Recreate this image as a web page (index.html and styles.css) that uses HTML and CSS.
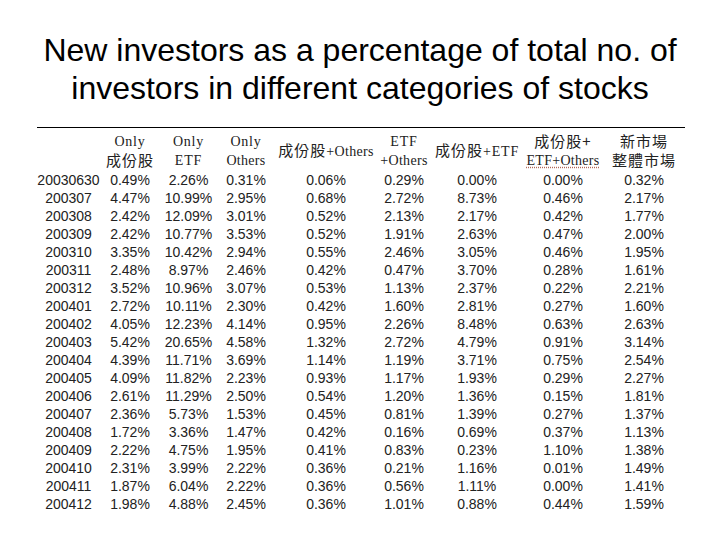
FILE: index.html
```html
<!DOCTYPE html>
<html lang="en">
<head>
<meta charset="utf-8">
<title>New investors</title>
<link rel="stylesheet" href="styles.css">
</head>
<body>
<div class="slide">
  <h1 class="title">New investors as a percentage of total no. of<br>investors in different categories of stocks</h1>
  <table class="data">
    <colgroup>
      <col class="c0"><col class="c1"><col class="c2"><col class="c3"><col class="c4"><col class="c5"><col class="c6"><col class="c7"><col class="c8">
    </colgroup>
    <thead>
      <tr>
        <th></th>
        <th><span class="lat">Only</span><br><span class="cjk">成份股</span></th>
        <th><span class="lat">Only</span><br><span class="lat">ETF</span></th>
        <th><span class="lat">Only</span><br><span class="lat sm">Others</span></th>
        <th><span class="cjk">成份股</span><span class="lat sm">+Others</span></th>
        <th><span class="lat">ETF</span><br><span class="lat sm">+Others</span></th>
        <th><span class="cjk">成份股</span><span class="lat">+ETF</span></th>
        <th><span class="cjk">成份股+</span><br><span class="lat sm spell">ETF+Others</span></th>
        <th><span class="cjk">新市場</span><br><span class="cjk">整體市場</span></th>
      </tr>
    </thead>
    <tbody>
      <tr><td>20030630</td><td>0.49%</td><td>2.26%</td><td>0.31%</td><td>0.06%</td><td>0.29%</td><td>0.00%</td><td>0.00%</td><td>0.32%</td></tr>
      <tr><td>200307</td><td>4.47%</td><td>10.99%</td><td>2.95%</td><td>0.68%</td><td>2.72%</td><td>8.73%</td><td>0.46%</td><td>2.17%</td></tr>
      <tr><td>200308</td><td>2.42%</td><td>12.09%</td><td>3.01%</td><td>0.52%</td><td>2.13%</td><td>2.17%</td><td>0.42%</td><td>1.77%</td></tr>
      <tr><td>200309</td><td>2.42%</td><td>10.77%</td><td>3.53%</td><td>0.52%</td><td>1.91%</td><td>2.63%</td><td>0.47%</td><td>2.00%</td></tr>
      <tr><td>200310</td><td>3.35%</td><td>10.42%</td><td>2.94%</td><td>0.55%</td><td>2.46%</td><td>3.05%</td><td>0.46%</td><td>1.95%</td></tr>
      <tr><td>200311</td><td>2.48%</td><td>8.97%</td><td>2.46%</td><td>0.42%</td><td>0.47%</td><td>3.70%</td><td>0.28%</td><td>1.61%</td></tr>
      <tr><td>200312</td><td>3.52%</td><td>10.96%</td><td>3.07%</td><td>0.53%</td><td>1.13%</td><td>2.37%</td><td>0.22%</td><td>2.21%</td></tr>
      <tr><td>200401</td><td>2.72%</td><td>10.11%</td><td>2.30%</td><td>0.42%</td><td>1.60%</td><td>2.81%</td><td>0.27%</td><td>1.60%</td></tr>
      <tr><td>200402</td><td>4.05%</td><td>12.23%</td><td>4.14%</td><td>0.95%</td><td>2.26%</td><td>8.48%</td><td>0.63%</td><td>2.63%</td></tr>
      <tr><td>200403</td><td>5.42%</td><td>20.65%</td><td>4.58%</td><td>1.32%</td><td>2.72%</td><td>4.79%</td><td>0.91%</td><td>3.14%</td></tr>
      <tr><td>200404</td><td>4.39%</td><td>11.71%</td><td>3.69%</td><td>1.14%</td><td>1.19%</td><td>3.71%</td><td>0.75%</td><td>2.54%</td></tr>
      <tr><td>200405</td><td>4.09%</td><td>11.82%</td><td>2.23%</td><td>0.93%</td><td>1.17%</td><td>1.93%</td><td>0.29%</td><td>2.27%</td></tr>
      <tr><td>200406</td><td>2.61%</td><td>11.29%</td><td>2.50%</td><td>0.54%</td><td>1.20%</td><td>1.36%</td><td>0.15%</td><td>1.81%</td></tr>
      <tr><td>200407</td><td>2.36%</td><td>5.73%</td><td>1.53%</td><td>0.45%</td><td>0.81%</td><td>1.39%</td><td>0.27%</td><td>1.37%</td></tr>
      <tr><td>200408</td><td>1.72%</td><td>3.36%</td><td>1.47%</td><td>0.42%</td><td>0.16%</td><td>0.69%</td><td>0.37%</td><td>1.13%</td></tr>
      <tr><td>200409</td><td>2.22%</td><td>4.75%</td><td>1.95%</td><td>0.41%</td><td>0.83%</td><td>0.23%</td><td>1.10%</td><td>1.38%</td></tr>
      <tr><td>200410</td><td>2.31%</td><td>3.99%</td><td>2.22%</td><td>0.36%</td><td>0.21%</td><td>1.16%</td><td>0.01%</td><td>1.49%</td></tr>
      <tr><td>200411</td><td>1.87%</td><td>6.04%</td><td>2.22%</td><td>0.36%</td><td>0.56%</td><td>1.11%</td><td>0.00%</td><td>1.41%</td></tr>
      <tr><td>200412</td><td>1.98%</td><td>4.88%</td><td>2.45%</td><td>0.36%</td><td>1.01%</td><td>0.88%</td><td>0.44%</td><td>1.59%</td></tr>
    </tbody>
  </table>
</div>
</body>
</html>
```

FILE: styles.css
```css
html, body {
  margin: 0;
  padding: 0;
  background: #ffffff;
}

.slide {
  width: 720px;
  height: 540px;
  overflow: hidden;
  padding-top: 31px;
  box-sizing: border-box;
}

.title {
  margin: 0;
  font-family: "Liberation Sans", Arial, sans-serif;
  font-weight: normal;
  font-size: 32px;
  line-height: 38px;
  text-align: center;
  color: #000;
}

.data {
  margin: 20px 0 0 37px;
  width: 648px;
  table-layout: fixed;
  border-collapse: collapse;
  border-top: 1px solid #000;
  font-family: "Liberation Sans", Arial, sans-serif;
  font-size: 14px;
  color: #222;
}

.c0 { width: 63px; }
.c1 { width: 60px; }
.c2 { width: 57px; }
.c3 { width: 58px; }
.c4 { width: 102px; }
.c5 { width: 54px; }
.c6 { width: 92px; }
.c7 { width: 80px; }
.c8 { width: 82px; }

.data th {
  font-weight: normal;
  padding: 4px 0 1px;
  line-height: 18px;
  text-align: center;
  vertical-align: middle;
  white-space: nowrap;
}

.data td {
  padding: 0;
  height: 18px;
  line-height: 18px;
  text-align: center;
  white-space: nowrap;
}

.lat {
  font-family: "Liberation Serif", "Times New Roman", serif;
  font-size: 14px;
  letter-spacing: 0.8px;
}

.lat.sm {
  font-size: 14px;
  letter-spacing: 0.3px;
}

.cjk {
  font-family: "Noto Sans CJK TC", "Noto Sans CJK SC", sans-serif;
  font-size: 15px;
  letter-spacing: 1px;
}

.spell {
  text-decoration: underline dotted #b06a5a;
  text-underline-offset: 2px;
}
```
